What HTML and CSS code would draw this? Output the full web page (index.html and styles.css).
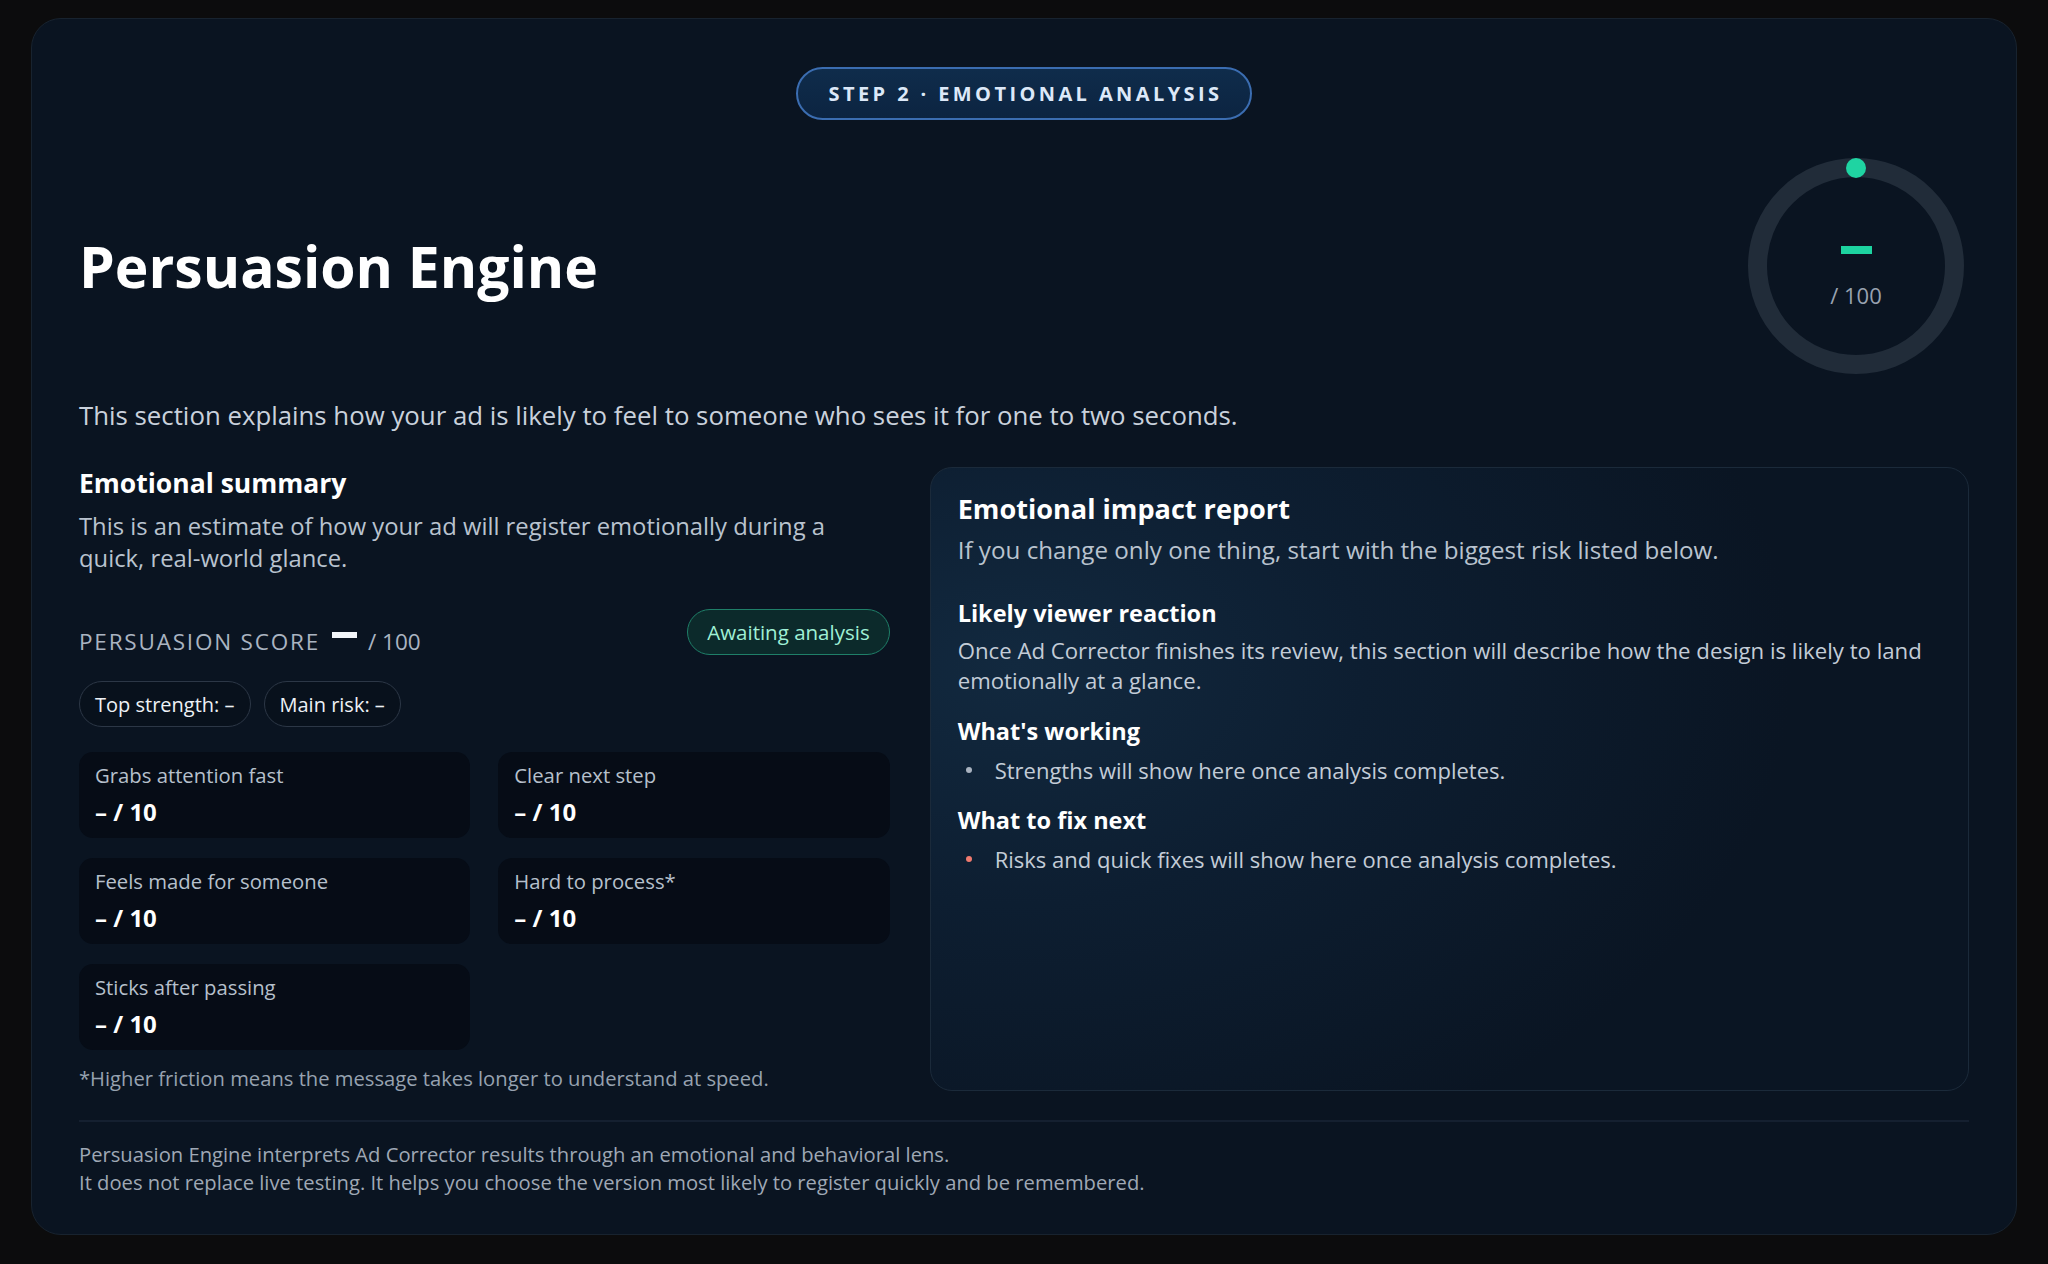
FILE: index.html
```html
<!DOCTYPE html>
<html lang="en">
<head>
    <meta charset="UTF-8">
    <meta name="viewport" content="width=device-width, initial-scale=1.0">
    <title>Persuasion Engine</title>
    <link rel="stylesheet" href="styles.css">
</head>
<body>
    <section class="engine">
        <div class="step">
            <span class="step_pill">STEP 2 · EMOTIONAL ANALYSIS</span>
        </div>

        <header class="engine_header">
            <h1>Persuasion Engine</h1>
            <div class="gauge">
                <svg class="gauge_ring" width="216" height="216" viewBox="0 0 216 216">
                    <circle cx="108" cy="108" r="98.5" fill="none" stroke="#212c39" stroke-width="19"/>
                    <circle cx="108" cy="10" r="10" fill="#1fd4a2"/>
                </svg>
                <div class="gauge_value">
                    <span class="gauge_dash"></span>
                    <span class="gauge_max">/ 100</span>
                </div>
            </div>
        </header>

        <p class="intro">This section explains how your ad is likely to feel to someone who sees it for one to two seconds.</p>

        <div class="columns">
            <div class="summary">
                <h2>Emotional summary</h2>
                <p class="summary_text">This is an estimate of how your ad will register emotionally during a quick, real-world glance.</p>

                <div class="score_row">
                    <div class="score"><span class="score_label">PERSUASION SCORE</span><span class="score_dash"></span><span class="score_max">/ 100</span></div>
                    <span class="status">Awaiting analysis</span>
                </div>

                <div class="chips">
                    <span class="chip">Top strength: –</span>
                    <span class="chip">Main risk: –</span>
                </div>

                <div class="metrics">
                    <div class="metric">
                        <span class="metric_label">Grabs attention fast</span>
                        <span class="metric_value">– / 10</span>
                    </div>
                    <div class="metric">
                        <span class="metric_label">Clear next step</span>
                        <span class="metric_value">– / 10</span>
                    </div>
                    <div class="metric">
                        <span class="metric_label">Feels made for someone</span>
                        <span class="metric_value">– / 10</span>
                    </div>
                    <div class="metric">
                        <span class="metric_label">Hard to process*</span>
                        <span class="metric_value">– / 10</span>
                    </div>
                    <div class="metric">
                        <span class="metric_label">Sticks after passing</span>
                        <span class="metric_value">– / 10</span>
                    </div>
                </div>

                <p class="footnote">*Higher friction means the message takes longer to understand at speed.</p>
            </div>

            <div class="report">
                <h2>Emotional impact report</h2>
                <p class="report_sub">If you change only one thing, start with the biggest risk listed below.</p>

                <h3>Likely viewer reaction</h3>
                <p class="report_text">Once Ad Corrector finishes its review, this section will describe how the design is likely to land emotionally at a glance.</p>

                <h3>What's working</h3>
                <ul class="report_list">
                    <li>Strengths will show here once analysis completes.</li>
                </ul>

                <h3>What to fix next</h3>
                <ul class="report_list report_list-risk">
                    <li>Risks and quick fixes will show here once analysis completes.</li>
                </ul>
            </div>
        </div>

        <footer class="engine_footer">
            <p>Persuasion Engine interprets Ad Corrector results through an emotional and behavioral lens.<br>
            It does not replace live testing. It helps you choose the version most likely to register quickly and be remembered.</p>
        </footer>
    </section>
</body>
</html>
```

FILE: styles.css
```css
body{
    margin: 0;
    padding: 18px 31px 28px;
    background-color: #0c0c0d;
    font-family: "Open Sans", "Noto Sans", sans-serif;
    color: #f2f5f9;
}

.engine{
    background-color: #0a1421;
    border: 1px solid #18232f;
    border-radius: 30px;
    padding: 48px 47px 38px;
}

/* step badge */
.step{
    display: flex;
    justify-content: center;
}

.step_pill{
    display: inline-flex;
    align-items: center;
    height: 49px;
    padding: 0 28px 0 31px;
    border: 2px solid #3b6db1;
    border-radius: 30px;
    background: linear-gradient(180deg, #0f2c4b, #0c2441);
    color: #dce8f8;
    font-size: 20px;
    font-weight: 700;
    letter-spacing: 0.17em;
}

/* header + gauge */
.engine_header{
    display: flex;
    justify-content: space-between;
    align-items: center;
    margin-top: 38px;
}

h1{
    margin: 0;
    font-size: 57px;
    font-weight: 700;
    color: #ffffff;
}

.gauge{
    display: grid;
    width: 216px;
    height: 216px;
    margin-right: 5px;
}

.gauge_ring,
.gauge_value{
    grid-area: 1 / 1;
}

.gauge_value{
    display: flex;
    flex-direction: column;
    align-items: center;
    padding-top: 88px;
    gap: 27px;
}

.gauge_dash{
    width: 31px;
    height: 8px;
    background-color: #1dd3a0;
}

.gauge_max{
    font-size: 22px;
    line-height: 28px;
    color: #98a2b0;
}

.intro{
    margin: 25px 0 0;
    font-size: 25.8px;
    line-height: 32px;
    color: #c9d1dc;
}

/* two columns */
.columns{
    display: grid;
    grid-template-columns: minmax(0, 0.78fr) minmax(0, 1fr);
    gap: 40px;
    margin-top: 36px;
}

.summary h2{
    margin: 0;
    font-size: 26.5px;
    line-height: 32px;
    color: #ffffff;
}

.summary_text{
    margin: 11px 0 0;
    font-size: 23.8px;
    line-height: 32px;
    color: #b9c3cf;
}

.score_row{
    display: flex;
    justify-content: space-between;
    align-items: flex-end;
    margin-top: 35px;
}

.score{
    margin-bottom: 1px;
    font-size: 22.5px;
    line-height: 24px;
    color: #aab4c1;
}

.score_label{
    letter-spacing: 0.08em;
}

.score_dash{
    display: inline-block;
    width: 25px;
    height: 6px;
    margin: 0 11px 0 12px;
    vertical-align: 12px;
    background-color: #f2f5f9;
}

.status{
    display: inline-flex;
    align-items: center;
    height: 44px;
    padding: 0 19px;
    border: 1px solid #1f7f68;
    border-radius: 24px;
    background-color: #0c2a2b;
    color: #9ff0d6;
    font-size: 20.5px;
}

.chips{
    display: flex;
    gap: 13px;
    margin-top: 26px;
}

.chip{
    display: inline-flex;
    align-items: center;
    height: 44px;
    padding: 0 15px;
    border: 1.5px solid #2c3746;
    border-radius: 24px;
    background-color: #08111c;
    color: #eef2f6;
    font-size: 20px;
}

.metrics{
    display: grid;
    grid-template-columns: 1fr 1fr;
    column-gap: 28px;
    row-gap: 20px;
    margin-top: 25px;
}

.metric{
    display: flex;
    flex-direction: column;
    gap: 11px;
    height: 86px;
    box-sizing: border-box;
    padding: 11px 16px 12px;
    border-radius: 14px;
    background-color: #060c16;
}

.metric_label{
    font-size: 20.3px;
    line-height: 24px;
    color: #b6c0cc;
}

.metric_value{
    font-size: 24px;
    line-height: 28px;
    font-weight: 700;
    color: #ffffff;
}

.footnote{
    margin: 15px 0 0;
    font-size: 20.2px;
    line-height: 26px;
    color: #97a2b0;
}

/* report panel */
.report{
    padding: 24px 27px;
    border: 1px solid #1b2a3a;
    border-radius: 22px;
    background: radial-gradient(ellipse 75% 85% at 8% 32%, #12293f 0%, #0d1e31 45%, #0a1523 100%);
}

.report h2{
    margin: 0;
    font-size: 27.1px;
    line-height: 34px;
    color: #ffffff;
}

.report_sub{
    margin: 9px 0 0;
    font-size: 24.2px;
    line-height: 30px;
    color: #b9c3cf;
}

.report h3{
    margin: 20px 0 0;
    font-size: 23.5px;
    line-height: 30px;
    color: #ffffff;
}

.report_sub + h3{
    margin-top: 33px;
}

.report_text{
    margin: 8px 0 0;
    font-size: 22.2px;
    line-height: 30px;
    color: #c3ccd7;
}

.report_list{
    list-style: none;
    margin: 9px 0 0;
    padding: 0;
}

.report_list li{
    display: flex;
    align-items: center;
    gap: 23px;
    font-size: 22px;
    line-height: 30px;
    color: #c3ccd7;
}

.report_list li::before{
    content: "";
    width: 6px;
    height: 6px;
    margin-left: 8px;
    border-radius: 50%;
    background-color: #a9b3c0;
}

.report_list-risk li::before{
    background-color: #f07a6e;
}

/* footer */
.engine_footer{
    margin-top: 29px;
    padding-top: 18px;
    border-top: 2px solid #152030;
}

.engine_footer p{
    margin: 0;
    font-size: 20.2px;
    line-height: 28px;
    color: #9fa8b5;
}
```
